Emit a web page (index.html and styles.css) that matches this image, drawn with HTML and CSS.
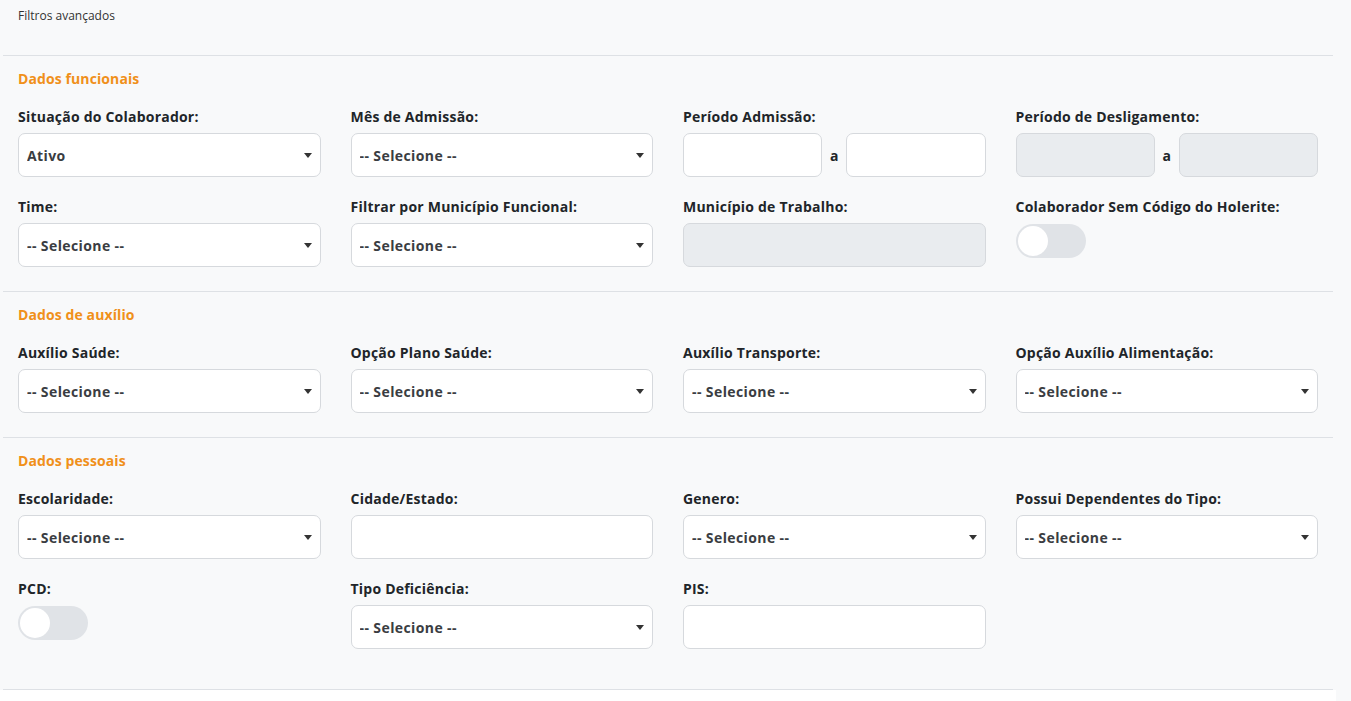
FILE: index.html
```html
<!DOCTYPE html>
<html lang="pt-BR">
<head>
<meta charset="utf-8">
<title>Filtros avançados</title>
<link rel="stylesheet" href="styles.css">
</head>
<body>
<div class="panel">
  <div class="panel-header">Filtros avançados</div>

  <section class="section">
    <h3 class="section-title">Dados funcionais</h3>
    <div class="grid">
      <div class="field">
        <label class="label">Situação do Colaborador:</label>
        <div class="select-wrap"><select class="control"><option>Ativo</option></select></div>
      </div>
      <div class="field">
        <label class="label">Mês de Admissão:</label>
        <div class="select-wrap"><select class="control"><option>-- Selecione --</option></select></div>
      </div>
      <div class="field">
        <label class="label">Período Admissão:</label>
        <div class="range">
          <input class="control" type="text">
          <span class="range-sep">a</span>
          <input class="control" type="text">
        </div>
      </div>
      <div class="field">
        <label class="label">Período de Desligamento:</label>
        <div class="range">
          <input class="control" type="text" disabled>
          <span class="range-sep">a</span>
          <input class="control" type="text" disabled>
        </div>
      </div>
      <div class="field">
        <label class="label">Time:</label>
        <div class="select-wrap"><select class="control"><option>-- Selecione --</option></select></div>
      </div>
      <div class="field">
        <label class="label">Filtrar por Município Funcional:</label>
        <div class="select-wrap"><select class="control"><option>-- Selecione --</option></select></div>
      </div>
      <div class="field">
        <label class="label">Município de Trabalho:</label>
        <input class="control" type="text" disabled>
      </div>
      <div class="field">
        <label class="label">Colaborador Sem Código do Holerite:</label>
        <span class="toggle"><span class="knob"></span></span>
      </div>
    </div>
  </section>

  <section class="section">
    <h3 class="section-title">Dados de auxílio</h3>
    <div class="grid">
      <div class="field">
        <label class="label">Auxílio Saúde:</label>
        <div class="select-wrap"><select class="control"><option>-- Selecione --</option></select></div>
      </div>
      <div class="field">
        <label class="label">Opção Plano Saúde:</label>
        <div class="select-wrap"><select class="control"><option>-- Selecione --</option></select></div>
      </div>
      <div class="field">
        <label class="label">Auxílio Transporte:</label>
        <div class="select-wrap"><select class="control"><option>-- Selecione --</option></select></div>
      </div>
      <div class="field">
        <label class="label">Opção Auxílio Alimentação:</label>
        <div class="select-wrap"><select class="control"><option>-- Selecione --</option></select></div>
      </div>
    </div>
  </section>

  <section class="section section-last">
    <h3 class="section-title">Dados pessoais</h3>
    <div class="grid">
      <div class="field">
        <label class="label">Escolaridade:</label>
        <div class="select-wrap"><select class="control"><option>-- Selecione --</option></select></div>
      </div>
      <div class="field">
        <label class="label">Cidade/Estado:</label>
        <input class="control" type="text">
      </div>
      <div class="field">
        <label class="label">Genero:</label>
        <div class="select-wrap"><select class="control"><option>-- Selecione --</option></select></div>
      </div>
      <div class="field">
        <label class="label">Possui Dependentes do Tipo:</label>
        <div class="select-wrap"><select class="control"><option>-- Selecione --</option></select></div>
      </div>
      <div class="field">
        <label class="label">PCD:</label>
        <span class="toggle"><span class="knob"></span></span>
      </div>
      <div class="field">
        <label class="label">Tipo Deficiência:</label>
        <div class="select-wrap"><select class="control"><option>-- Selecione --</option></select></div>
      </div>
      <div class="field">
        <label class="label">PIS:</label>
        <input class="control" type="text">
      </div>
    </div>
  </section>
</div>
<div class="footer"></div>
</body>
</html>
```

FILE: styles.css
```css
html, body {
  margin: 0;
  padding: 0;
}
body {
  background: #f8f9fa;
  font-family: "Open Sans", "Liberation Sans", sans-serif;
  color: #212529;
}
.panel {
  margin-left: 3px;
  width: 1330px;
}
.panel-header {
  height: 56px;
  box-sizing: border-box;
  padding: 8px 15px 0;
  font-size: 12px;
  line-height: 16px;
  color: #333;
  border-bottom: 1px solid #dee1e5;
}
.section {
  padding: 13px 15px 24px;
  border-bottom: 1px solid #dee1e5;
}
.section-last {
  padding-bottom: 40px;
}
.section-title {
  margin: 0 0 19px;
  padding-top: 1px;
  font-size: 14px;
  line-height: 18px;
  font-weight: 700;
  letter-spacing: 0.1px;
  color: #f0901a;
}
.grid {
  display: grid;
  grid-template-columns: repeat(4, 1fr);
  column-gap: 30px;
  row-gap: 20px;
}
.field {
  display: flex;
  flex-direction: column;
  align-items: flex-start;
}
.label {
  padding-top: 1px;
  font-size: 14px;
  line-height: 18px;
  font-weight: 700;
  letter-spacing: 0.22px;
  color: #212529;
  margin-bottom: 7px;
  white-space: nowrap;
}
.control {
  box-sizing: border-box;
  width: 100%;
  height: 44px;
  border: 1px solid #d6d9dd;
  border-radius: 7px;
  background: #fff;
  padding: 0 26px 0 8px;
  font-family: inherit;
  font-size: 14px;
  font-weight: 700;
  letter-spacing: 0.4px;
  color: #3a3d42;
  outline: none;
  -webkit-appearance: none;
  appearance: none;
  margin: 0;
}
.control:disabled {
  background: #e9ecef;
}
.select-wrap {
  position: relative;
  width: 100%;
}
.select-wrap::after {
  content: "";
  position: absolute;
  right: 9px;
  top: 20px;
  border-left: 4px solid transparent;
  border-right: 4px solid transparent;
  border-top: 5px solid #333;
  pointer-events: none;
}
.range {
  display: flex;
  align-items: center;
  width: 100%;
}
.range .control {
  flex: 1;
  min-width: 0;
}
.range-sep {
  width: 24px;
  text-align: center;
  font-size: 14px;
  font-weight: 700;
  color: #212529;
}
.toggle {
  display: inline-flex;
  align-items: center;
  box-sizing: border-box;
  width: 70px;
  height: 34px;
  border-radius: 17px;
  background: #e0e3e7;
  padding: 2px;
  margin-top: 1px;
}
.knob {
  width: 30px;
  height: 30px;
  border-radius: 50%;
  background: #fff;
}
.footer {
  width: 1336px;
  height: 12px;
  background: #fff;
}
```
